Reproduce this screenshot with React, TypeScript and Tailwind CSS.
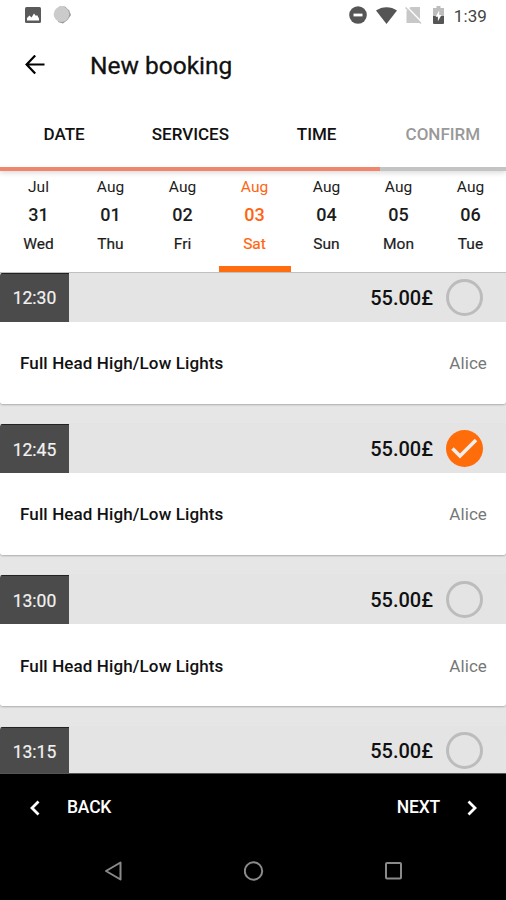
import { useState } from 'react'

type Day = { month: string; day: string; weekday: string }
type Slot = { time: string; service?: string; staff?: string }

const STEPS = ['DATE', 'SERVICES', 'TIME', 'CONFIRM']
const CURRENT_STEP = 2

const DAYS: Day[] = [
  { month: 'Jul', day: '31', weekday: 'Wed' },
  { month: 'Aug', day: '01', weekday: 'Thu' },
  { month: 'Aug', day: '02', weekday: 'Fri' },
  { month: 'Aug', day: '03', weekday: 'Sat' },
  { month: 'Aug', day: '04', weekday: 'Sun' },
  { month: 'Aug', day: '05', weekday: 'Mon' },
  { month: 'Aug', day: '06', weekday: 'Tue' },
]

const SLOTS: Slot[] = [
  { time: '12:30', service: 'Full Head High/Low Lights', staff: 'Alice' },
  { time: '12:45', service: 'Full Head High/Low Lights', staff: 'Alice' },
  { time: '13:00', service: 'Full Head High/Low Lights', staff: 'Alice' },
  { time: '13:15' },
]

function StatusBar() {
  return (
    <div className="flex h-[30px] shrink-0 items-center pl-[25px] pr-[19px]">
      <svg width="16" height="16" viewBox="0 0 16 16">
        <rect width="16" height="16" rx="1.5" fill="#5a5a5a" />
        <path d="M2 13.5V11l2.5-2.5 2 2L9 6.5l2 2.5 1-1 2 3.5v2z" fill="#fff" />
      </svg>
      <svg className="ml-3" width="18" height="18" viewBox="0 0 18 18">
        <path d="M6 .5h6l4 3.8L18 9l-3.500 5-4.500 3.500-5-1.500z" fill="#999" />
        <circle cx="8.500" cy="8.300" r="7.800" fill="#cbcbcb" />
      </svg>
      <div className="ml-auto flex items-center">
        <svg width="18" height="18" viewBox="0 0 18 18">
          <circle cx="9" cy="9" r="8.8" fill="#555" />
          <path d="M4.500 9h9" stroke="#fff" strokeWidth="2.800" />
        </svg>
        <svg className="ml-[9px]" width="21" height="17" viewBox="0 0 21 17">
          <path d="M0 3.6C6-1 15-1 21 3.6L10.5 17z" fill="#555" />
        </svg>
        <svg className="ml-[8px]" width="17" height="18" viewBox="0 0 17 18">
          <path d="M5.5 1H15v16H1.500V5z" fill="#c8c8c8" />
          <path d="M1.500 .5l16 16.500" stroke="#fff" strokeWidth="1.600" />
          <path d="M.5 1.500l15.500 16" stroke="#c8c8c8" strokeWidth="1.400" />
        </svg>
        <svg className="ml-[11px]" width="11" height="18" viewBox="0 0 11 18">
          <path d="M3.5 0h4v2H11v9H0V2h3.5z" fill="#bdbdbd" />
          <path d="M0 10h11v7a1 1 0 01-1 1H1a1 1 0 01-1-1z" fill="#555" />
          <path d="M6.2 4.5L2.6 10.8h2.3v4.5l3.6-6.2H6.2z" fill="#fff" />
        </svg>
        <span className="ml-[10px] mt-[2px] text-[17px] leading-none tracking-[0.1px] text-[#444]">1:39</span>
      </div>
    </div>
  )
}

function AppBar() {
  return (
    <div className="relative z-20 flex h-[70px] shrink-0 items-center bg-white pl-[25px]">
      <button aria-label="Go back">
        <svg width="20" height="20" viewBox="0 0 20 20" fill="none" stroke="#000" strokeWidth="2.2">
          <path d="M19.5 9.500H2M10.200 .5L1.600 9.500l8.600 9" />
        </svg>
      </button>
      <h1 className="ml-[45px] mt-[2px] text-[24.5px] leading-none text-[#111] [-webkit-text-stroke:0.3px_#111]">New booking</h1>
    </div>
  )
}

function Stepper() {
  return (
    <div className="relative z-10 shrink-0 bg-white shadow-[0_2px_5px_rgba(0,0,0,0.14)]">
      <div className="grid h-[67px] grid-cols-4 items-center pl-px pt-[2px] text-center text-[17px] font-medium">
        {STEPS.map((step, i) => (
          <span key={step} className={i <= CURRENT_STEP ? 'text-[#111]' : 'text-[#999]'}>{step}</span>
        ))}
      </div>
      <div className="h-1 bg-[#c4c4c4]">
        <div className="h-full w-3/4 bg-[#f0866b]" />
      </div>
    </div>
  )
}

function DayPicker({ selected, onSelect }: { selected: number; onSelect: (i: number) => void }) {
  return (
    <div className="flex h-[102px] shrink-0 border-b border-[#c0c0c0] bg-white pl-[2.5px]">
      {DAYS.map((d, i) => (
        <button
          key={d.day}
          onClick={() => onSelect(i)}
          className={`flex w-[72px] shrink-0 flex-col items-center border-b-[6px] pt-[2px] text-[15.5px] leading-[28px] ${i === selected ? 'border-[#ff6d10] text-[#ff6410]' : 'border-transparent text-[#1c1c1c]'}`}
        >
          <span>{d.month}</span>
          <span className="text-[18px] font-medium">{d.day}</span>
          <span className="pt-px [-webkit-text-stroke:0.2px_currentColor]">{d.weekday}</span>
        </button>
      ))}
    </div>
  )
}

function SlotCard({ slot, checked, onCheck }: { slot: Slot; checked: boolean; onCheck: () => void }) {
  return (
    <div className="shrink-0 overflow-hidden rounded-[3px] shadow-[0_1px_2px_rgba(0,0,0,0.25)]">
      <div className="flex h-[49px] items-center bg-[#e4e4e4]">
        <span className="flex h-full w-[69px] items-center justify-center border-t border-[#222] bg-[#4b4b4b] pt-px text-[17.5px] text-[#f2f2f2] [-webkit-text-stroke:0.2px_#f2f2f2]">
          {slot.time}
        </span>
        <span className="ml-auto text-[20px] font-medium text-[#111]">55.00£</span>
        <button onClick={onCheck} aria-label={`Pick ${slot.time}`} className="ml-[13px] mr-[22px]">
          <svg width="38" height="38" viewBox="0 0 38 38" fill="none">
            {checked ? (
              <>
                <circle cx="18.5" cy="18.5" r="18.5" fill="#ff6d0a" />
                <path d="M6.5 18.5l7.5 7.5L30 10" stroke="#f0eeec" strokeWidth="3.6" />
              </>
            ) : (
              <circle cx="18.5" cy="18.5" r="17" stroke="#bcbcbc" strokeWidth="3" />
            )}
          </svg>
        </button>
      </div>
      {slot.service && (
        <div className="flex h-[82px] items-center justify-between bg-white pl-5 pr-[19px] pt-[2px] text-[17px]">
          <span className="font-medium tracking-[0.12px] text-[#111]">{slot.service}</span>
          <span className="tracking-[0.1px] text-[#777]">{slot.staff}</span>
        </div>
      )}
    </div>
  )
}

function BottomBar() {
  return (
    <div className="flex h-[69px] shrink-0 items-center justify-between border-t border-[#555] bg-black px-[29px] pb-px text-[17.5px] font-medium text-white">
      <button className="flex items-center">
        <svg width="11" height="16" viewBox="0 0 11 16" fill="none" stroke="#fff" strokeWidth="2.8">
          <path d="M9.5 1.5L3 8l6.5 6.5" />
        </svg>
        <span className="ml-[27px] tracking-[-0.2px]">BACK</span>
      </button>
      <button className="flex items-center">
        <span className="mr-[27px] tracking-[-0.2px]">NEXT</span>
        <svg className="-mr-px" width="11" height="16" viewBox="0 0 11 16" fill="none" stroke="#fff" strokeWidth="2.8">
          <path d="M1.5 1.5L8 8l-6.5 6.5" />
        </svg>
      </button>
    </div>
  )
}

function SystemNav() {
  return (
    <div className="flex h-[58px] shrink-0 items-center justify-between bg-black pl-[103px] pr-[102px]">
      <svg width="20" height="20" viewBox="0 0 20 20" fill="none" stroke="#8a8a8a" strokeWidth="2">
        <path d="M17.5 1.5v17L3 10z" strokeLinejoin="round" />
      </svg>
      <svg width="20" height="20" viewBox="0 0 20 20" fill="none" stroke="#8a8a8a" strokeWidth="2">
        <circle cx="9.5" cy="10" r="8.7" />
      </svg>
      <svg width="20" height="20" viewBox="0 0 20 20" fill="none" stroke="#8a8a8a" strokeWidth="2">
        <rect x="2" y="2" width="15" height="15.5" rx="1" />
      </svg>
    </div>
  )
}

export default function App() {
  const [day, setDay] = useState(3)
  const [picked, setPicked] = useState('12:45')

  return (
    <div className="flex h-[900px] w-[506px] flex-col overflow-hidden bg-white font-['Roboto',sans-serif]">
      <StatusBar />
      <AppBar />
      <Stepper />
      <DayPicker selected={day} onSelect={setDay} />
      <div className="flex min-h-0 flex-1 flex-col gap-[20.2px] overflow-hidden bg-[#e6e6e6]">
        {SLOTS.map((s) => (
          <SlotCard key={s.time} slot={s} checked={picked === s.time} onCheck={() => setPicked(s.time)} />
        ))}
      </div>
      <BottomBar />
      <SystemNav />
    </div>
  )
}
